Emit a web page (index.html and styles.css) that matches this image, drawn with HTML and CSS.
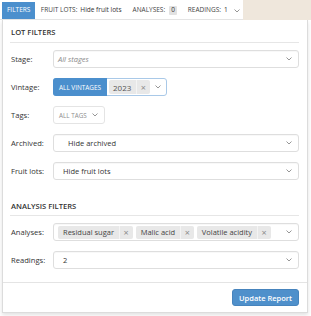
FILE: index.html
```html
<!DOCTYPE html>
<html>
<head>
<meta charset="utf-8">
<link rel="stylesheet" href="styles.css">
</head>
<body>
<div class="topbar">
  <div class="tabs">
    <span class="tab active">FILTERS</span>
    <span class="tab">FRUIT LOTS:<span class="val">Hide fruit lots</span></span>
    <span class="tab">ANALYSES:<span class="badge">0</span></span>
    <span class="tab">READINGS:<span class="val">1</span><svg class="chev tab-chev" width="6" height="4" viewBox="0 0 6 4"><polyline points="0.5,0.5 3,3 5.5,0.5"/></svg></span>
  </div>
  <div class="filler"></div>
</div>

<div class="panel">
  <section class="section">
    <h3 class="heading">LOT FILTERS</h3>
    <div class="rows">
      <label class="label">Stage:</label>
      <div class="select pad-5"><span class="placeholder">All stages</span><svg class="chev" width="6" height="4" viewBox="0 0 6 4"><polyline points="0.5,0.5 3,3 5.5,0.5"/></svg></div>

      <label class="label">Vintage:</label>
      <div class="multi focus">
        <span class="all-btn">ALL VINTAGES</span>
        <span class="tag"><span class="tag-text">2023</span><span class="tag-x">×</span></span>
        <svg class="chev" width="6" height="4" viewBox="0 0 6 4"><polyline points="0.5,0.5 3,3 5.5,0.5"/></svg>
      </div>

      <label class="label">Tags:</label>
      <div class="small-btn">ALL TAGS<svg class="chev" width="6" height="4" viewBox="0 0 6 4"><polyline points="0.5,0.5 3,3 5.5,0.5"/></svg></div>

      <label class="label">Archived:</label>
      <div class="select pad-15"><span class="value">Hide archived</span><svg class="chev" width="6" height="4" viewBox="0 0 6 4"><polyline points="0.5,0.5 3,3 5.5,0.5"/></svg></div>

      <label class="label">Fruit lots:</label>
      <div class="select pad-10"><span class="value">Hide fruit lots</span><svg class="chev" width="6" height="4" viewBox="0 0 6 4"><polyline points="0.5,0.5 3,3 5.5,0.5"/></svg></div>
    </div>
  </section>

  <section class="section analysis">
    <h3 class="heading">ANALYSIS FILTERS</h3>
    <div class="rows">
      <label class="label">Analyses:</label>
      <div class="select pad-5 tags-select">
        <span class="tags-list">
          <span class="tag"><span class="tag-text">Residual sugar</span><span class="tag-x">×</span></span>
          <span class="tag"><span class="tag-text">Malic acid</span><span class="tag-x">×</span></span>
          <span class="tag"><span class="tag-text">Volatile acidity</span><span class="tag-x">×</span></span>
        </span>
        <svg class="chev" width="6" height="4" viewBox="0 0 6 4"><polyline points="0.5,0.5 3,3 5.5,0.5"/></svg>
      </div>

      <label class="label">Readings:</label>
      <div class="select pad-10"><span class="value">2</span><svg class="chev" width="6" height="4" viewBox="0 0 6 4"><polyline points="0.5,0.5 3,3 5.5,0.5"/></svg></div>
    </div>
  </section>

  <div class="footer">
    <button class="update">Update Report</button>
  </div>
</div>
</body>
</html>
```

FILE: styles.css
```css
* { box-sizing: border-box; margin: 0; padding: 0; }
html, body { width: 311px; height: 316px; overflow: hidden; }
body {
  font-family: "Open Sans", "Liberation Sans", sans-serif;
  color: #333;
  background: #fff;
}

.topbar { display: flex; height: 20px; }
.tabs {
  display: flex;
  align-items: stretch;
  width: 243px;
  background: #fff;
  border-bottom: 1px solid #e4e4e4;
  padding: 2px 0 0 2px;
  font-size: 6.5px;
  line-height: 1;
}
.tab {
  display: flex;
  align-items: center;
  padding: 0 5.5px;
  color: #444;
  white-space: nowrap;
}
.tab.active {
  background: #4b8fcd;
  color: #fff;
  padding: 0 5px;
}
.tab .val { margin-left: 3px; color: #333; }
.badge {
  margin-left: 4px;
  background: #e2e2e2;
  color: #333;
  padding: 1px 2px;
  border-radius: 1px;
}
.tab-chev { margin-left: 6px; }
.filler { flex: 1; background: #efe7dc; }

.chev { display: block; flex: none; }
.chev polyline { fill: none; stroke: #8a8a8a; stroke-width: 0.9; }

.panel {
  margin-left: 2px;
  width: 306px;
  height: 293px;
  background: #fff;
  border: 1px solid #dcdcdc;
  border-top: none;
  box-shadow: 0 2px 4px rgba(0, 0, 0, 0.12);
  display: flex;
  flex-direction: column;
}

.section { padding: 7px 8px 0; }
.section.analysis { padding-top: 21px; }

.heading {
  font-size: 7.6px;
  font-weight: 600;
  line-height: 10px;
  color: #333;
  padding-bottom: 5px;
  border-bottom: 1px solid #e6e6e6;
  margin-bottom: 7px;
  margin-left: -1px;
  padding-left: 1px;
}
.analysis .heading { padding-bottom: 4px; margin-bottom: 7px; }

.rows {
  display: grid;
  grid-template-columns: 42px 1fr;
  row-gap: 10px;
  align-items: center;
}
.label { font-size: 7.6px; color: #333; line-height: 10px; }

.select {
  height: 18px;
  border: 1px solid #dedede;
  border-radius: 3px;
  display: flex;
  align-items: center;
  justify-content: space-between;
  padding-right: 6px;
  font-size: 7.5px;
  box-shadow: inset 0 1px 1px rgba(0, 0, 0, 0.03);
}
.pad-5 { padding-left: 4px; }
.pad-10 { padding-left: 9px; }
.pad-15 { padding-left: 14px; }
.placeholder { font-style: italic; color: #8a8a8a; }
.value { color: #333; }

.multi {
  justify-self: start;
  width: 114px;
  height: 18px;
  border: 1px solid #a9c9e8;
  border-radius: 3px;
  display: flex;
  align-items: center;
  font-size: 8px;
}
.all-btn {
  align-self: stretch;
  display: flex;
  align-items: center;
  background: #4b8fcd;
  color: #fff;
  font-size: 6.4px;
  padding: 0 6px;
  margin: -1px 0 -1px -1px;
  border-radius: 3px 0 0 3px;
  white-space: nowrap;
}
.multi .tag { margin-left: 2px; height: 14px; }
.multi .tag-text { padding: 0 5px 0 4px; color: #555; }
.multi .chev { margin-left: 5px; }

.tag {
  display: inline-flex;
  align-items: stretch;
  height: 13px;
  background: #e8e8e8;
  color: #444;
  border-radius: 2px;
  white-space: nowrap;
}
.tag-text { display: flex; align-items: center; padding: 0 5px 0 5px; }
.tag-x {
  display: flex;
  align-items: center;
  padding: 0 4px 0 3.5px;
  color: #8c8c8c;
  font-size: 9px;
  border-left: 1px solid #f4f4f4;
}
.tags-list { display: flex; gap: 3px; }

.small-btn {
  justify-self: start;
  width: 52px;
  height: 18px;
  border: 1px solid #e4e4e4;
  border-radius: 3px;
  display: flex;
  align-items: center;
  justify-content: space-between;
  padding: 0 6px 0 5px;
  font-size: 6.3px;
  color: #8e8e8e;
}

.footer {
  margin-top: auto;
  height: 30px;
  border-top: 1px solid #e4e4e4;
  display: flex;
  justify-content: flex-end;
  align-items: flex-start;
  padding: 6px 8px 0;
}
.update {
  height: 17px;
  width: 67px;
  background: #4f90cb;
  color: #fff;
  border: 1px solid #4784bd;
  border-radius: 3px;
  font-family: "Open Sans", "Liberation Sans", sans-serif;
  font-size: 7.5px;
  font-weight: 600;
}
```
